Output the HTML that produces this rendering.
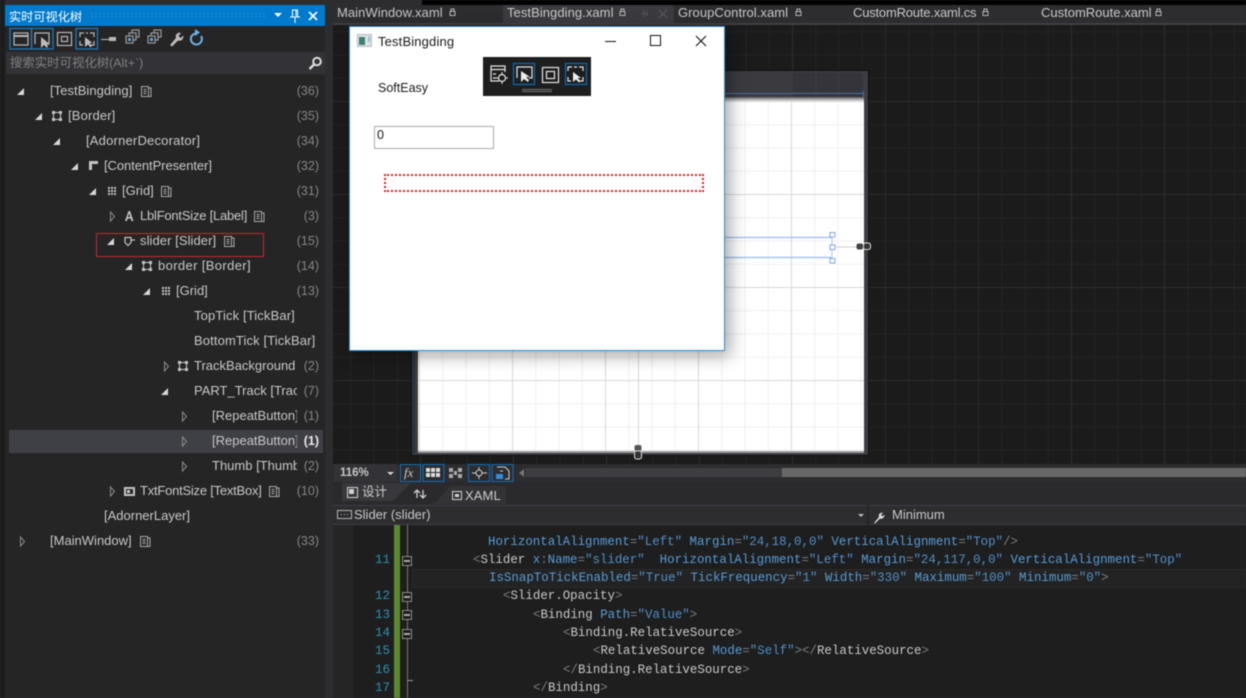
<!DOCTYPE html>
<html lang="zh"><head><meta charset="utf-8"><title>实时可视化树</title>
<style>
*{box-sizing:border-box}
html,body{margin:0;padding:0;width:1246px;height:698px;overflow:hidden;background:#2d2d30}
body{font-family:"Liberation Sans","Noto Sans CJK SC",sans-serif;font-size:13px;color:#c8c8c8}
#w{position:absolute;left:0;top:0;width:1246px;height:698px;overflow:hidden;filter:blur(.4px)}
.a{position:absolute}
.t{position:absolute;white-space:nowrap;line-height:16px;height:16px;overflow:hidden}
.r{position:absolute;right:927px;white-space:nowrap;line-height:16px;color:#858585;font-size:12.5px}
svg{position:absolute;overflow:visible}
.c{position:absolute;left:0;white-space:pre;font-family:"Liberation Mono",monospace;font-size:12.45px;line-height:18px;color:#c8c8c8}
.c b{font-weight:normal;color:#7d7d7d}.c i{font-style:normal;color:#569cd6}.c u{text-decoration:none;color:#4f8fc9}
.n{position:absolute;left:360px;width:30px;text-align:right;font-family:"Liberation Mono",monospace;font-size:12.5px;line-height:18px;color:#2b91af}
.fold{position:absolute;left:402px;width:10px;height:10px;border:1px solid #8a8a8a;background:#1e1e1e}
.fold:after{content:"";position:absolute;left:1px;top:3px;width:6px;height:2px;background:#aaa}
.tab{position:absolute;top:5px;line-height:16px;color:#c8c8c8;font-size:13px;white-space:nowrap}
</style></head><body><div id="w">

<!-- top strip and document area -->
<div class="a" style="left:422px;top:0;width:824px;height:5px;background:#000"></div>
<div class="a" style="left:333px;top:5px;width:913px;height:19px;background:#2d2d30"></div>
<div class="a" style="left:503px;top:5px;width:171px;height:19px;background:#3a3a3f"></div>
<div class="a" style="left:333px;top:23px;width:913px;height:2px;background:#3f3f46"></div>
<div class="a" style="left:333px;top:25px;width:913px;height:439px;background-color:#1b1b1c;background-image:
linear-gradient(to right,#2e2e30 1px,transparent 1px),linear-gradient(to bottom,#2e2e30 1px,transparent 1px),
linear-gradient(to right,#232325 1px,transparent 1px),linear-gradient(to bottom,#232325 1px,transparent 1px);
background-size:93px 93px,93px 93px,23.25px 23.25px,23.25px 23.25px;background-position:-6px -17px,-6px -17px,-6px -17px,-6px -17px"></div>

<!-- tabs -->
<div class="tab" style="left:337px;letter-spacing:.06px">MainWindow.xaml</div>
<div class="tab" style="left:507px;letter-spacing:.06px">TestBingding.xaml</div>
<div class="tab" style="left:678px;letter-spacing:.06px">GroupControl.xaml</div>
<div class="tab" style="left:853px;letter-spacing:-.2px">CustomRoute.xaml.cs</div>
<div class="tab" style="left:1041px">CustomRoute.xaml</div>
<svg style="left:0;top:1px" width="1246" height="30" fill="none" stroke="#b5b5b5">
<path d="M450 14.500h5v-4h-5zM451 10v-2h3v2" /><path d="M620 14.500h5v-4h-5zM621 10v-2h3v2"/><path d="M796 14.500h5v-4h-5zM797 10v-2h3v2"/><path d="M983 14.500h5v-4h-5zM984 10v-2h3v2"/><path d="M1156 14.500h5v-4h-5zM1157 10v-2h3v2"/>
<path d="M641 12.500h6M644 9v7M647 10v5" stroke="#55555a"/><path d="M659 9l8 8M667 9l-8 8" stroke="#55555a" stroke-width="1.300"/>
</svg>

<!-- design surface -->
<div class="a" style="left:411px;top:70px;width:458px;height:386px;background:#3d3d42;border:1px solid #0f0f10"></div>
<div class="a" style="left:413px;top:71px;width:2px;height:383px;background:#26303f"></div>
<div class="a" style="left:418px;top:72px;width:446px;height:25px;background:#3a3a3f"></div>
<div class="a" style="left:793px;top:73px;width:22px;height:24px;background:#34343a"></div>
<div class="a" style="left:817px;top:73px;width:21px;height:24px;background:#34343a"></div>
<div class="a" style="left:840px;top:73px;width:22px;height:24px;background:#34343a"></div>
<div class="a" style="left:418px;top:93px;width:446px;height:1px;background:#4a70a8"></div>
<div class="a" style="left:863px;top:91px;width:1px;height:9px;background:#4a70a8"></div>
<div class="a" style="left:418px;top:100px;width:446px;height:351px;background-color:#fff;background-image:
linear-gradient(to right,#d8d8d8 1px,transparent 1px),linear-gradient(to bottom,#d8d8d8 1px,transparent 1px),
linear-gradient(to right,#f0f0f0 1px,transparent 1px),linear-gradient(to bottom,#f0f0f0 1px,transparent 1px);
background-size:93px 93px,93px 93px,23.25px 23.25px,23.25px 23.25px;background-position:1px 1px,1px 1px,1px 1px,1px 1px;box-shadow:0 2px 0 #9a9a9a"></div>
<div class="a" style="left:638px;top:351px;width:1px;height:101px;background:#d8d8d8"></div>
<div class="a" style="left:418px;top:97px;width:446px;height:4px;background:linear-gradient(#5e5e62,#ddd)"></div>

<!-- adorners -->
<svg style="left:0;top:0" width="1246" height="470" fill="none">
<path d="M725 237.500H832M725 257.500H832" stroke="#a9c4f2" stroke-width="1.500"/>
<path d="M832 234v26" stroke="#a9c4f2" stroke-width="1"/>
<rect x="830" y="232.500" width="5" height="4.500" fill="#fff" stroke="#7fa6ec"/><rect x="830" y="245" width="5" height="4.500" fill="#fff" stroke="#7fa6ec"/><rect x="830" y="258.500" width="5" height="4.500" fill="#fff" stroke="#7fa6ec"/>
<path d="M835 247H857" stroke="#cfcfcf"/>
<rect x="856.500" y="243.500" width="6.500" height="6" rx="2" fill="#444"/>
<rect x="863.500" y="243" width="7" height="6.500" rx="2" fill="#333" stroke="#ddd"/>
<rect x="634.500" y="445" width="7" height="6" rx="2" fill="#555"/>
<rect x="634.500" y="451" width="7" height="8" rx="2" fill="#333" stroke="#ddd"/>
</svg>

<!-- floating window -->
<div class="a" style="left:349px;top:26px;width:376px;height:325px;background:#fff;border:1px solid #2f8fd8;box-shadow:5px 5px 16px rgba(0,0,0,.35)"></div>
<svg style="left:357px;top:34px" width="16" height="14"><rect x="0.500" y="0.500" width="14" height="12" fill="#dfe3e6" stroke="#b8bcc0"/><rect x="2" y="3" width="6" height="8" fill="#3d7f75"/><rect x="11" y="2" width="2" height="6" fill="#9cc0d4"/></svg>
<div class="t" style="left:378px;top:34px;color:#1a1a1a;font-size:13px;height:17px;letter-spacing:.15px">TestBingding</div>
<svg style="left:600px;top:30px" width="120" height="22" fill="none" stroke="#111"><path d="M5 11.500H16"/><rect x="50.500" y="5.500" width="10" height="10"/><path d="M96 6l10 10M106 6l-10 10" stroke-width="1.100"/></svg>
<div class="t" style="left:378px;top:80px;color:#1a1a1a;font-size:12.5px">SoftEasy</div>
<div class="a" style="left:374px;top:126px;width:120px;height:23px;background:#fff;border:1px solid #a9a9a9"></div>
<div class="t" style="left:377px;top:127px;color:#111;font-size:12.5px">0</div>
<div class="a" style="left:384px;top:174px;width:320px;height:18px;border:2px dotted #e4181c"></div>

<!-- floating toolbar -->
<div class="a" style="left:483px;top:57px;width:108px;height:39px;background:#1e1e1f"></div>
<svg style="left:483px;top:57px" width="108" height="39" fill="none" stroke="#e6e6e6" stroke-width="1.200">
<path d="M16 24H8V9h14v6M8 12.500h14M10 17h3M10 21h3"/><circle cx="19" cy="21" r="3.500"/><path d="M19 15v2.500M19 24.500V27M13 21h2.500M22.500 21H25" stroke-width="1"/>
<rect x="30.500" y="6.500" width="21" height="21" stroke="#0b6cb5"/><path d="M34 21v-11h15v11h-3" /><path d="M38 14l0 11 3-3 4 3 1-2-3-3h4z" fill="#eee" stroke="none"/>
<rect x="59.500" y="10.500" width="16" height="15"/><rect x="63.500" y="14.500" width="8" height="7"/>
<rect x="82.500" y="6.500" width="21" height="21" stroke="#0b6cb5"/><path d="M85 14v-4h4M100 14v-4h-4M85 20v4h3M100 20v4h-3M91 10h3" /><path d="M90 15l0 10 3-2.500 3 3 1.500-1.500-3-3h3.500z" fill="#eee" stroke="none"/>
<path d="M39 32.500h30M39 34.500h30" stroke="#777" stroke-width="1"/>
</svg>

<!-- left tool window -->
<div class="a" style="left:0;top:0;width:5px;height:698px;background:#1c1c1d"></div>
<div class="a" style="left:5px;top:26px;width:320px;height:672px;background:#252526"></div>
<div class="a" style="left:5px;top:5px;width:320px;height:21px;background:#007acc"></div>
<div class="t" style="left:9px;top:8px;color:#fff;font-size:12.2px;font-family:'Noto Sans CJK SC',sans-serif">实时可视化树</div>
<div class="a" style="left:90px;top:12px;width:175px;height:5px;background-image:radial-gradient(#4aa3dc 0.600px,transparent 0.800px);background-size:4px 3px"></div>
<svg style="left:270px;top:6px" width="55" height="20" fill="#fff" stroke="#fff">
<path d="M4 7h8l-4 4z" stroke="none"/><path d="M22.500 4h5v7h-5zM20 11h10M25 11v6M26 4v6" fill="none"/><path d="M39 6l8 8M47 6l-8 8" stroke-width="1.600" fill="none"/>
</svg>
<!-- tree toolbar -->
<svg style="left:5px;top:26px" width="320" height="26" fill="none" stroke="#b8b8b8" stroke-width="1.200">
<rect x="5" y="2.500" width="21.500" height="20.500" stroke="#1a7dc4"/><rect x="26.500" y="2.500" width="21.500" height="20.500" stroke="#1a7dc4"/>
<rect x="9" y="7" width="14" height="12"/><path d="M9 10h14" stroke-width="2"/>
<path d="M30 18v-11h14v11h-3"/><path d="M36 11v11l3-3 3 3 1-2-2-2.500h3z" fill="#bbb" stroke="none"/>
<rect x="52.500" y="6.500" width="14" height="13"/><rect x="56.500" y="10.500" width="6" height="5"/>
<rect x="71" y="2.500" width="21.500" height="20.500" stroke="#1a7dc4"/><path d="M75 11V7h4M89 11V7h-4M75 15v4h3M89 15v4h-3M81 7h2"/><path d="M80 11v10l3-2.500 2.500 3 1.500-1.500-2.500-3h3z" fill="#bbb" stroke="none"/>
<rect x="104" y="11" width="7" height="4" fill="#b8b8b8" stroke="none"/><path d="M96 13.500h8" stroke-width="1"/>
<rect x="121" y="10" width="7" height="7" stroke="#9a9a9a"/><path d="M124 10V7h7v7h-3M127 7V4h7v7h-3" stroke="#9a9a9a"/><rect x="123" y="12" width="3" height="3" fill="#5aa5dc" stroke="none"/>
<rect x="143" y="10" width="7" height="7" stroke="#9a9a9a"/><path d="M146 10V7h7v7h-3M149 7V4h7v7h-3" stroke="#9a9a9a"/><rect x="145" y="12" width="3" height="3" fill="#5aa5dc" stroke="none"/>
<path d="M165 19l6-7c-1-3 1-6 5-5l-2.500 3 2 2 3-2.500c0 4-2.500 6-5.500 5l-6 6z" fill="#bdbdbd" stroke="none"/>
<path d="M192 7.500a5.500 5.500 0 1 0 4 2.500" stroke="#6bb1e8" stroke-width="2"/><path d="M190 3v7l5-3.500z" fill="#6bb1e8" stroke="none"/>
</svg>
<!-- search -->
<div class="a" style="left:6px;top:52px;width:319px;height:23px;background:#333337;border-bottom:1px solid #2a2a2c"></div>
<div class="t" style="left:10px;top:55px;color:#808080;font-size:12.4px;font-family:'Liberation Sans','Noto Sans CJK SC',sans-serif">搜索实时可视化树(Alt+`)</div>
<svg style="left:308px;top:56px" width="15" height="15" fill="none" stroke="#dcdcdc" stroke-width="2"><circle cx="9" cy="5.500" r="3.800"/><path d="M6 8.500L1.500 13" stroke-width="2.400"/></svg>

<!-- selected row & red rect -->
<div class="a" style="left:9px;top:430px;width:314px;height:22.500px;background:#3f3f46"></div>
<div class="a" style="left:96px;top:233px;width:168px;height:24px;border:1px solid #c8282d"></div>

<!-- tree arrows -->
<svg style="left:0;top:0" width="330" height="560">
<g fill="#d8d8d8" transform="translate(0 1)">
<path d="M24 87v7h-7z"/><path d="M42 112v7h-7z"/><path d="M60 137v7h-7z"/><path d="M78 162v7h-7z"/><path d="M96 187v7h-7z"/><path d="M114 237v7h-7z"/><path d="M132 262v7h-7z"/><path d="M150 287v7h-7z"/><path d="M168 387v7h-7z"/>
</g>
<g fill="none" stroke="#8c8c8c">
<path d="M110.500 212v9l4-4.500z"/><path d="M164.500 362v9l4-4.500z"/><path d="M182.500 412v9l4-4.500z"/><path d="M182.500 437v9l4-4.500z"/><path d="M182.500 462v9l4-4.500z"/><path d="M110.500 487v9l4-4.500z"/><path d="M20.500 537v9l4-4.500z"/>
</g>
<!-- doc icons -->
<g fill="none" stroke="#a8a8a8">
<path transform="translate(141.500 86.500)" d="M0 0h7v10h-7zM7 1.500h2.500v8.500h-2.500M2 3h3M2 5h3M2 7h3"/>
<path transform="translate(161.500 186.500)" d="M0 0h7v10h-7zM7 1.500h2.500v8.500h-2.500M2 3h3M2 5h3M2 7h3"/>
<path transform="translate(254.500 211.500)" d="M0 0h7v10h-7zM7 1.500h2.500v8.500h-2.500M2 3h3M2 5h3M2 7h3"/>
<path transform="translate(224.500 236.500)" d="M0 0h7v10h-7zM7 1.500h2.500v8.500h-2.500M2 3h3M2 5h3M2 7h3"/>
<path transform="translate(269.500 486.500)" d="M0 0h7v10h-7zM7 1.500h2.500v8.500h-2.500M2 3h3M2 5h3M2 7h3"/>
<path transform="translate(140.500 536.500)" d="M0 0h7v10h-7zM7 1.500h2.500v8.500h-2.500M2 3h3M2 5h3M2 7h3"/>
</g>
<!-- border icons: box with corner squares -->
<g fill="#c4c4c4">
<path transform="translate(52 111)" d="M0 0h3v3h-3zM7 0h3v3h-3zM0 7h3v3h-3zM7 7h3v3h-3zM1 3h1v4h-1zM8 3h1v4h-1zM3 1h4v1h-4zM3 8h4v1h-4z"/>
<path transform="translate(142 261)" d="M0 0h3v3h-3zM7 0h3v3h-3zM0 7h3v3h-3zM7 7h3v3h-3zM1 3h1v4h-1zM8 3h1v4h-1zM3 1h4v1h-4zM3 8h4v1h-4z"/>
<path transform="translate(178 361)" d="M0 0h3v3h-3zM7 0h3v3h-3zM0 7h3v3h-3zM7 7h3v3h-3zM1 3h1v4h-1zM8 3h1v4h-1zM3 1h4v1h-4zM3 8h4v1h-4z"/>
</g>
<g fill="none" stroke="#c4c4c4" stroke-width="1.200">
<path d="M125 237.500h6v5l-3 3-3-3zM131 240h4"/>
</g>
<g fill="#c4c4c4">
<path d="M89 161h9v3h-6v6h-3z"/>
<path d="M108 187h2v2h-2zM111 187h2v2h-2zM114 187h2v2h-2zM108 190h2v2h-2zM111 190h2v2h-2zM114 190h2v2h-2zM108 193h2v2h-2zM111 193h2v2h-2zM114 193h2v2h-2z"/>
<path d="M162 287h2v2h-2zM165 287h2v2h-2zM168 287h2v2h-2zM162 290h2v2h-2zM165 290h2v2h-2zM168 290h2v2h-2zM162 293h2v2h-2zM165 293h2v2h-2zM168 293h2v2h-2z"/>
<path d="M125 221l3.500-10h1.500l3.500 10h-2l-.8-2.500h-3l-.8 2.500zM127.800 217h2.500l-1.200-3.500z"/>
<path d="M124 487h11v9h-11zM126 489v5h7v-5z" fill-rule="evenodd"/><rect x="127" y="490" width="3" height="3"/>
</g>
</svg>

<!-- tree text -->
<div class="t" style="left:50px;top:83px;letter-spacing:.05px">[TestBingding]</div><div class="r" style="top:83px">(36)</div>
<div class="t" style="left:68px;top:108px;letter-spacing:.15px">[Border]</div><div class="r" style="top:108px">(35)</div>
<div class="t" style="left:86px;top:133px;letter-spacing:.2px">[AdornerDecorator]</div><div class="r" style="top:133px">(34)</div>
<div class="t" style="left:104px;top:158px;letter-spacing:-.07px">[ContentPresenter]</div><div class="r" style="top:158px">(32)</div>
<div class="t" style="left:122px;top:183px">[Grid]</div><div class="r" style="top:183px">(31)</div>
<div class="t" style="left:140px;top:208px;letter-spacing:-.22px">LblFontSize [Label]</div><div class="r" style="top:208px">(3)</div>
<div class="t" style="left:140px;top:233px;letter-spacing:.07px">slider [Slider]</div><div class="r" style="top:233px">(15)</div>
<div class="t" style="left:158px;top:258px;letter-spacing:.37px">border [Border]</div><div class="r" style="top:258px">(14)</div>
<div class="t" style="left:176px;top:283px">[Grid]</div><div class="r" style="top:283px">(13)</div>
<div class="t" style="left:194px;top:308px;letter-spacing:.13px">TopTick [TickBar]</div>
<div class="t" style="left:194px;top:333px;letter-spacing:.12px">BottomTick [TickBar]</div>
<div class="t" style="left:194px;top:358px;width:103px">TrackBackground</div><div class="r" style="top:358px">(2)</div>
<div class="t" style="left:194px;top:383px;width:103px">PART_Track [TrackBar]</div><div class="r" style="top:383px">(7)</div>
<div class="t" style="left:212px;top:408px;width:85px">[RepeatButton]</div><div class="r" style="top:408px">(1)</div>
<div class="t" style="left:212px;top:433px;width:85px">[RepeatButton]</div><div class="r" style="top:433px;color:#e8e8e8;font-weight:bold">(1)</div>
<div class="t" style="left:212px;top:458px;width:85px">Thumb [Thumb]</div><div class="r" style="top:458px">(2)</div>
<div class="t" style="left:140px;top:483px;letter-spacing:-.23px">TxtFontSize [TextBox]</div><div class="r" style="top:483px">(10)</div>
<div class="t" style="left:104px;top:508px">[AdornerLayer]</div>
<div class="t" style="left:50px;top:533px">[MainWindow]</div><div class="r" style="top:533px">(33)</div>

<!-- bottom of designer -->
<div class="a" style="left:333px;top:464px;width:913px;height:18px;background:#2d2d30"></div>
<div class="a" style="left:525px;top:468px;width:721px;height:9px;background:#3e3e42"></div>
<div class="a" style="left:334px;top:464px;width:63px;height:18px;background:#333337"></div>
<div class="t" style="left:340px;top:465px;font-size:11.5px;font-weight:bold;color:#c8c8c8">116%</div>
<svg style="left:333px;top:464px" width="220" height="18" fill="none" stroke="#cfcfcf">
<path d="M54 8h7l-3.500 3z" fill="#ddd" stroke="none"/>
<rect x="67.500" y="0.500" width="20" height="17" stroke="#0e6fb5"/><rect x="90" y="0.500" width="21" height="17" stroke="#0e6fb5"/><rect x="135.500" y="0.500" width="21" height="17" stroke="#0e6fb5"/><rect x="159" y="0.500" width="21" height="17" stroke="#0e6fb5"/>
<g fill="#ddd" stroke="none"><rect x="93" y="4" width="4" height="4"/><rect x="98" y="4" width="4" height="4"/><rect x="103" y="4" width="4" height="4"/><rect x="93" y="9" width="4" height="4"/><rect x="98" y="9" width="4" height="4"/><rect x="103" y="9" width="4" height="4"/></g>
<g fill="#aaa" stroke="none"><rect x="116" y="4" width="4" height="4"/><rect x="125" y="4" width="4" height="4"/><rect x="116" y="10" width="4" height="4"/><rect x="125" y="10" width="4" height="4"/><rect x="121" y="7" width="3" height="4"/></g>
<circle cx="146" cy="9" r="3"/><path d="M139 9h4M149 9h5M146 3v3M146 12v3"/>
<path d="M164 3h8l4 4v8h-4M167 7h3"/><rect x="163" y="10" width="7" height="5" fill="#2e8fe0" stroke="none"/>
<path d="M191 5v8l-5-4z" fill="#777" stroke="none"/>
</svg>
<div class="t" style="left:404px;top:465px;font-family:'Liberation Serif',serif;font-style:italic;font-size:13px;color:#ccc">fx</div>
<div class="a" style="left:782px;top:468px;width:464px;height:9px;background:#686868"></div>

<div class="a" style="left:333px;top:482px;width:913px;height:23px;background:#2a2a2c"></div>
<svg style="left:333px;top:482px" width="200" height="23"><path d="M9 1H78L60 19H9z" fill="#38383c"/><path d="M104 19L117 4H173V22H96z" fill="#333337"/>
<g fill="none" stroke="#d0d0d0"><rect x="14.500" y="5.500" width="10" height="10"/><path d="M84 8v8M81 11l3-3 3 3M90 16V8M87 13l3 3 3-3" stroke-width="1.300"/><rect x="119.500" y="9.500" width="9" height="8"/></g><rect x="16" y="7" width="5" height="5" fill="#d0d0d0"/><rect x="122" y="12" width="4" height="3" fill="#d0d0d0"/></svg>
<div class="t" style="left:362px;top:484px;color:#ccc;font-size:12.5px">设计</div>
<div class="t" style="left:465px;top:488px;color:#ccc;font-size:13px;letter-spacing:.1px">XAML</div>

<div class="a" style="left:333px;top:505px;width:913px;height:20px;background:#2d2d30;border-top:1px solid #3f3f46;border-bottom:1px solid #3f3f46"></div>
<div class="a" style="left:867px;top:505px;width:2px;height:20px;background:#252526"></div>
<svg style="left:337px;top:510px" width="16" height="10" fill="none" stroke="#b5b5b5"><rect x="0.500" y="0.500" width="14" height="8"/><path d="M4 4.500h1M7 4.500h1M10 4.500h1"/></svg>
<div class="t" style="left:354px;top:507px;color:#c8c8c8">Slider (slider)</div>
<svg style="left:857px;top:512px" width="36" height="12"><path d="M1 2h6L4 5z" fill="#bbb"/><path d="M17 11l5-6c-1-2 1-5 4-4l-2 2 1.500 1.500 2-2c0 3-2 5-4.500 4l-5 5z" fill="#ddd"/></svg>
<div class="t" style="left:892px;top:507px;color:#c8c8c8">Minimum</div>

<!-- code editor -->
<div class="a" style="left:333px;top:525px;width:913px;height:173px;background:#1e1e1e;overflow:hidden"></div>
<div class="a" style="left:333px;top:525px;width:20px;height:173px;background:#252526"></div>
<div class="a" style="left:394px;top:525px;width:6px;height:173px;background:#5a8a2e"></div>
<div class="a" style="left:407px;top:525px;width:1px;height:173px;background:#777"></div>
<div class="a" style="left:412px;top:569px;width:834px;height:19px;background:#232323;border:1px solid #2a2a2a;border-right:0"></div>
<div class="a" style="left:407px;top:680px;width:6px;height:1px;background:#999"></div>

<div class="n" style="top:551px">11</div><div class="n" style="top:587px">12</div><div class="n" style="top:606px">13</div><div class="n" style="top:624px">14</div><div class="n" style="top:642px">15</div><div class="n" style="top:661px">16</div><div class="n" style="top:679px">17</div>
<div class="fold" style="top:556px"></div><div class="fold" style="top:592px"></div><div class="fold" style="top:610px"></div><div class="fold" style="top:629px"></div>

<div class="c" style="left:488px;top:533px"><i>HorizontalAlignment</i><b>=</b><u>"Left"</u> <i>Margin</i><b>=</b><u>"24,18,0,0"</u> <i>VerticalAlignment</i><b>=</b><u>"Top"</u><b>/&gt;</b></div>
<div class="c" style="left:473px;top:551px"><b>&lt;</b>Slider <i>x</i><b>:</b><i>Name</i><b>=</b><u>"slider"</u>  <i>HorizontalAlignment</i><b>=</b><u>"Left"</u> <i>Margin</i><b>=</b><u>"24,117,0,0"</u> <i>VerticalAlignment</i><b>=</b><u>"Top"</u></div>
<div class="c" style="left:489px;top:569px"><i>IsSnapToTickEnabled</i><b>=</b><u>"True"</u> <i>TickFrequency</i><b>=</b><u>"1"</u> <i>Width</i><b>=</b><u>"330"</u> <i>Maximum</i><b>=</b><u>"100"</u> <i>Minimum</i><b>=</b><u>"0"</u><b>&gt;</b></div>
<div class="c" style="left:503px;top:587px"><b>&lt;</b>Slider.Opacity<b>&gt;</b></div>
<div class="c" style="left:533px;top:606px"><b>&lt;</b>Binding <i>Path</i><b>=</b><u>"Value"</u><b>&gt;</b></div>
<div class="c" style="left:563px;top:624px"><b>&lt;</b>Binding.RelativeSource<b>&gt;</b></div>
<div class="c" style="left:593px;top:642px"><b>&lt;</b>RelativeSource <i>Mode</i><b>=</b><u>"Self"</u><b>&gt;&lt;/</b>RelativeSource<b>&gt;</b></div>
<div class="c" style="left:563px;top:661px"><b>&lt;/</b>Binding.RelativeSource<b>&gt;</b></div>
<div class="c" style="left:533px;top:679px"><b>&lt;/</b>Binding<b>&gt;</b></div>
</div></body></html>
